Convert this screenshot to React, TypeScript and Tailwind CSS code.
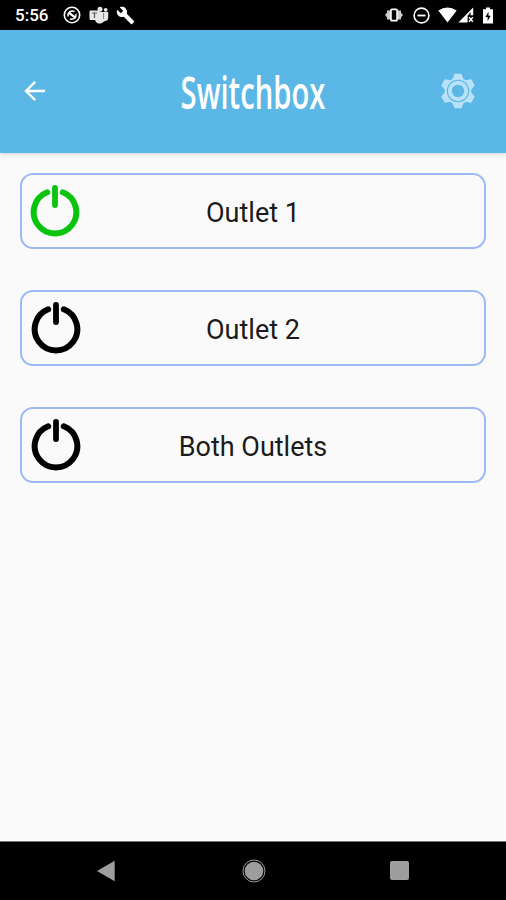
import type React from "react";

interface Outlet {
	id: number;
	label: string;
	on: boolean;
}

const OUTLETS: Outlet[] = [
	{ id: 1, label: "Outlet 1", on: true },
	{ id: 2, label: "Outlet 2", on: false },
	{ id: 3, label: "Both Outlets", on: false },
];

const GEAR_TEETH = [0, 60, 120, 180, 240, 300];

const PowerIcon: React.FC = () => (
	<svg
		viewBox="0 0 50 54"
		className="w-[50px] h-[54px]"
		fill="none"
		stroke="currentColor"
		strokeLinecap="round"
	>
		<path d="M17.2 8.3A21.3 21.3 0 1 0 32.8 8.3" strokeWidth="6" />
		<path d="M25 3.9V21.1" strokeWidth="5.8" />
	</svg>
);

const GearIcon: React.FC = () => (
	<svg viewBox="-18 -18 36 36" className="w-9 h-9">
		<g fill="#b9e2f8" stroke="#b9e2f8" strokeWidth="1.5" strokeLinejoin="round">
			<circle r="12.6" />
			{GEAR_TEETH.map((angle) => (
				<path
					key={angle}
					d="M-5-11L-3-16.6H3L5-11Z"
					transform={`rotate(${angle})`}
				/>
			))}
		</g>
		<circle r="10.7" fill="none" stroke="#5bb8e6" strokeWidth="1.1" />
		<circle r="6.2" fill="#5bb8e6" />
	</svg>
);

const StatusBar: React.FC = () => (
	<div className="h-[30px] bg-black text-white flex items-center justify-between pl-[15px] pr-[13px]">
		<div className="flex items-center">
			<span className="w-[35px] text-[17px] leading-[30px] font-medium whitespace-nowrap">
				5:56
			</span>
			<svg viewBox="0 0 18 18" className="w-[18px] h-[18px] ml-[13px]" fill="none" stroke="#fff">
				<circle cx="9" cy="9" r="7.7" strokeWidth="1.6" />
				<path d="M5.2 10.5A4.2 4.2 0 0 1 11.5 5.7M12.9 8A4.2 4.2 0 0 1 7 12.8" strokeWidth="1.4" />
				<path d="M5.5 6.5L12.8 11.8" strokeWidth="2.2" />
			</svg>
			<svg viewBox="0 0 20 18" className="w-5 h-[18px] ml-[8px]" fill="#e8e8e8">
				<circle cx="11" cy="3.2" r="2.5" />
				<circle cx="16.7" cy="3.8" r="1.9" />
				<path d="M8 6H19.2V11.5A3.5 3.5 0 0 1 16 15L12 17.4A5 5 0 0 1 6 14Z" />
				<rect x="0.5" y="4.5" width="10" height="9.5" rx="1" />
				<path d="M3 7H8M5.5 7V12" stroke="#555" strokeWidth="1.2" />
				<path d="M14.6 7V13" stroke="#555" strokeWidth="0.7" />
			</svg>
			<svg viewBox="0 0 24 24" className="w-[19px] h-[19px] ml-[7px]" fill="#fff">
				<path d="M22.7 19l-9.1-9.1c.9-2.3.4-5-1.5-6.9-2-2-5-2.4-7.4-1.3L9 6 6 9 1.6 4.7C.4 7.1.9 10.1 2.9 12.1c1.9 1.9 4.6 2.4 6.9 1.5l9.1 9.1c.4.4 1 .4 1.4 0l2.3-2.3c.5-.4.5-1.1.1-1.4z" />
			</svg>
		</div>
		<div className="flex items-center">
			<svg viewBox="0 0 18 14" className="w-[18px] h-[14px]" fill="#ccc">
				<path d="M0 7L2.4 4V10Z" />
				<path d="M18 7L15.6 4V10Z" />
				<rect x="2" y="2.5" width="3" height="9" />
				<rect x="13" y="2.5" width="3" height="9" />
				<rect x="5.9" y="1.3" width="6.2" height="11.4" rx="1" fill="none" stroke="#fff" strokeWidth="1.7" />
			</svg>
			<svg viewBox="0 0 17 17" className="w-[17px] h-[17px] ml-[10px]" fill="none" stroke="#fff">
				<circle cx="8.5" cy="8.5" r="7.4" strokeWidth="1.6" />
				<path d="M4.5 8.5H12.5" strokeWidth="1.8" />
			</svg>
			<svg viewBox="0 0 19 16" className="w-[19px] h-4 ml-[8px]" fill="#fff">
				<path d="M9.5 15.5L0.3 3.5Q9.5-2.5 18.7 3.5Z" />
			</svg>
			<svg viewBox="0 0 16 16" className="w-4 h-4 ml-px" fill="#fff">
				<path d="M15.2 0.6V8.2H9.6V15.4H0.4Z" />
				<path d="M12.6 5V8.5H9.6V9Z" fill="#000" />
				<path d="M11 10.2L14.8 14.8M14.8 10.2L11 14.8" stroke="#fff" strokeWidth="1.4" />
			</svg>
			<svg viewBox="0 0 10 17" className="w-[10px] h-[17px] ml-[9px]">
				<path d="M3 0.5H7V2.2H10V16.5H0V2.2H3Z" fill="#fff" />
				<path d="M5.5 4.8L2.4 10H4.6V14L7.7 8.8H5.5Z" fill="#000" />
			</svg>
		</div>
	</div>
);

const Header: React.FC = () => (
	<header className="h-[123px] pb-px bg-[#5bb8e6] flex items-center justify-between pl-[23px] pr-[30px] shadow-[0_1px_4px_rgba(0,0,0,0.16)]">
		<button className="w-[42px]" aria-label="Back">
			<svg viewBox="0 0 24 24" className="w-6 h-6" fill="none" stroke="#fff" strokeWidth="2.4">
				<path d="M22 12H3.5M12.2 2.8L3 12L12.2 21.2" />
			</svg>
		</button>
		<h1 className="w-[146px] pb-px ml-px flex justify-center font-['Open_Sans',sans-serif] font-[650] text-[46px] leading-[60px] text-white">
			<span className="scale-x-[0.635]">Switchbox</span>
		</h1>
		<button aria-label="Settings">
			<GearIcon />
		</button>
	</header>
);

const OutletButton: React.FC<{ outlet: Outlet }> = ({ outlet }) => (
	<button className="h-[76px] w-full grid grid-cols-[50px_1fr_50px] items-center px-[8px] rounded-[13px] border-2 border-[#9db9f8]">
		<span className={outlet.on ? "text-[#0bc40f]" : "pl-px text-black"}>
			<PowerIcon />
		</span>
		<span className="pt-[3px] text-[27px] leading-8 text-[#1b1b1b]">
			{outlet.label}
		</span>
	</button>
);

const NavBar: React.FC = () => (
	<nav className="h-[59px] pb-px bg-black border-t border-[#777] flex items-center justify-between px-[96px]">
		<svg viewBox="0 0 20 22" className="w-5 h-[22px]" fill="#9e9e9e">
			<path d="M1 11L18.7 0.8V21.2Z" />
		</svg>
		<svg viewBox="0 0 24 24" className="w-6 h-6 ml-px" fill="#9e9e9e">
			<circle cx="12" cy="12" r="9.3" />
			<circle cx="12" cy="12" r="11" fill="none" stroke="#9e9e9e" strokeWidth="1" />
		</svg>
		<span className="w-[19px] h-[19px] mr-px rounded-[2px] bg-[#9e9e9e]" />
	</nav>
);

export default function App() {
	return (
		<div className="w-[506px] h-[900px] flex flex-col bg-[#fafafa] font-[Roboto,sans-serif] overflow-hidden">
			<StatusBar />
			<Header />
			<main className="flex-1 flex flex-col gap-[41px] px-5 pt-5">
				{OUTLETS.map((outlet) => (
					<OutletButton key={outlet.id} outlet={outlet} />
				))}
			</main>
			<NavBar />
		</div>
	);
}
